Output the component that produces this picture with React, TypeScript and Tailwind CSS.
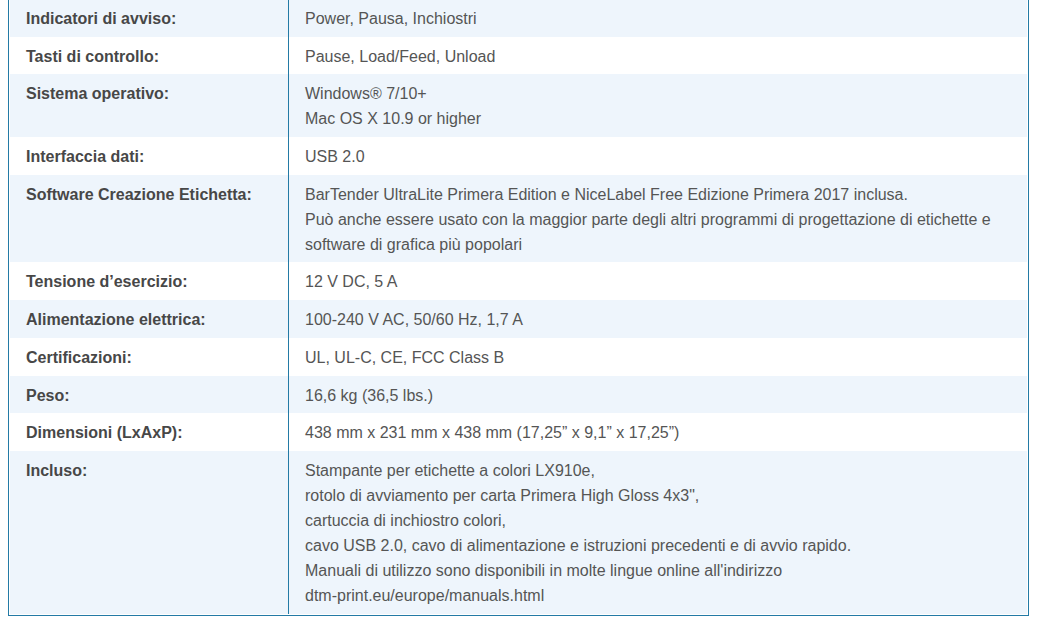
import React from "react";

type Row = { label: string; lines: string[] };

const rows: Row[] = [
  { label: "Indicatori di avviso:", lines: ["Power, Pausa, Inchiostri"] },
  { label: "Tasti di controllo:", lines: ["Pause, Load/Feed, Unload"] },
  { label: "Sistema operativo:", lines: ["Windows® 7/10+", "Mac OS X 10.9 or higher"] },
  { label: "Interfaccia dati:", lines: ["USB 2.0"] },
  {
    label: "Software Creazione Etichetta:",
    lines: [
      "BarTender UltraLite Primera Edition e NiceLabel Free Edizione Primera 2017 inclusa.",
      "Può anche essere usato con la maggior parte degli altri programmi di progettazione di etichette e software di grafica più popolari",
    ],
  },
  { label: "Tensione d’esercizio:", lines: ["12 V DC, 5 A"] },
  { label: "Alimentazione elettrica:", lines: ["100-240 V AC, 50/60 Hz, 1,7 A"] },
  { label: "Certificazioni:", lines: ["UL, UL-C, CE, FCC Class B"] },
  { label: "Peso:", lines: ["16,6 kg (36,5 lbs.)"] },
  { label: "Dimensioni (LxAxP):", lines: ["438 mm x 231 mm x 438 mm (17,25” x 9,1” x 17,25”)"] },
  {
    label: "Incluso:",
    lines: [
      "Stampante per etichette a colori LX910e,",
      "rotolo di avviamento per carta Primera High Gloss 4x3\",",
      "cartuccia di inchiostro colori,",
      "cavo USB 2.0, cavo di alimentazione e istruzioni precedenti e di avvio rapido.",
      "Manuali di utilizzo sono disponibili in molte lingue online all'indirizzo",
      "dtm-print.eu/europe/manuals.html",
    ],
  },
];

export default function App() {
  return (
    <div
      className="w-[1039px] h-[623px] bg-white overflow-hidden"
      style={{ fontFamily: '"Liberation Sans", Arial, sans-serif' }}
    >
      <div className="ml-[8px] -mt-[1px] w-[1021px] border-x border-b border-[#237aa5] bg-white px-[1px] pb-[1px]">
        {rows.map((r, i) => (
          <div key={i} className={`flex ${i % 2 === 0 ? "bg-[#eef5fc]" : "bg-white"}`}>
            <div className="w-[279px] shrink-0 border-r border-[#237aa5] pl-[16px] pr-[8px] pt-[7px] pb-[5.7px] text-[16px] leading-[25px] font-bold text-[#474747]">
              {r.label}
            </div>
            <div className="flex-1 pl-[16px] pr-[16px] pt-[7px] pb-[5.7px] text-[16px] leading-[25px] text-[#555]">
              {r.lines.map((l, j) => (
                <div key={j}>{l}</div>
              ))}
            </div>
          </div>
        ))}
      </div>
    </div>
  );
}
